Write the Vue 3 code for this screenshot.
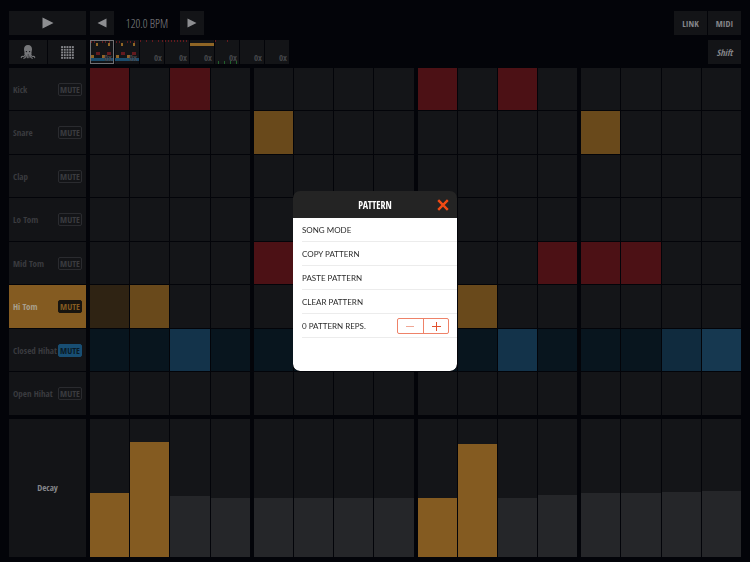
<template>
  <main class="app">
    <header class="toolbar">
      <button type="button" class="btn play" aria-label="Play">
        <svg viewBox="0 0 12 12" class="icon"><path d="M0.500 0.500 11.500 6 0.500 11.500z" /></svg>
      </button>
      <div class="tempo">
        <button type="button" class="btn step" aria-label="Slower" @click="bpm--">
          <svg viewBox="0 0 10 10" class="icon small"><path d="M9.500 0.500 0.500 5l9 4.500z" /></svg>
        </button>
        <output class="bpm">{{ bpm.toFixed(1) }} BPM</output>
        <button type="button" class="btn step" aria-label="Faster" @click="bpm++">
          <svg viewBox="0 0 10 10" class="icon small"><path d="M0.500 0.500 9.500 5l-9 4.500z" /></svg>
        </button>
      </div>
      <div class="sync">
        <button type="button" class="btn wide">LINK</button>
        <button type="button" class="btn wide">MIDI</button>
      </div>
    </header>

    <div class="toolbar second">
      <div class="modes">
        <button type="button" class="btn" aria-label="Kits">
          <svg viewBox="0 0 16 16" class="octopus">
            <path
              class="head"
              d="M8 1C5.300 1 4 2.900 4 5.200c0 1.500.7 2.800.6 4.800h6.800c-.1-2 .6-3.300.6-4.800C12 2.900 10.700 1 8 1z"
            />
            <path
              class="arms"
              d="M5.300 9c0 3-1.200 3.600-2.500 3.400-1-.2-1.500.3-1.500 1.200M6.300 9.500c.1 3-.6 4.600-2.600 4.700M7.300 9.500v4.300M8.900 9.500v4.300M9.900 9.500c0 3 .7 4.600 2.500 4.700M10.700 9c0 3 1.200 3.600 2.500 3.400 1-.2 1.500.3 1.500 1.200"
            />
            <circle class="eye" cx="6.400" cy="7.600" r=".7" />
            <circle class="eye" cx="9.600" cy="7.600" r=".7" />
          </svg>
        </button>
        <button type="button" class="btn" aria-label="Grid">
          <svg viewBox="0 0 13 13" class="dots">
            <template v-for="y in 5" :key="y">
              <rect v-for="x in 5" :key="x" :x="x * 2.7 - 2.6" :y="y * 2.7 - 2.6" width="1.9" height="1.9" />
            </template>
          </svg>
        </button>
      </div>
      <div class="patterns">
        <button
          v-for="(p, i) in patterns"
          :key="i"
          type="button"
          class="pattern"
          :class="{ selected: i === 0 }"
        >
          <svg viewBox="0 0 24 24" class="thumb">
            <rect
              v-for="(r, n) in p"
              :key="n"
              :class="r[0]"
              :x="r[1]"
              :y="r[2]"
              :width="r[3]"
              :height="r[4]"
            />
          </svg>
          <span class="reps">0x</span>
        </button>
      </div>
      <button type="button" class="btn wide shift">Shift</button>
    </div>

    <section class="tracks">
      <div v-for="t in tracks" :key="t.name" class="row">
        <div class="label" :class="{ active: t.active, muted: t.muted }">
          <span>{{ t.name }}</span>
          <button type="button" class="mute" @click="t.muted = !t.muted">MUTE</button>
        </div>
        <div class="beats">
          <div v-for="b in 4" :key="b" class="beat">
            <button
              v-for="s in 4"
              :key="s"
              type="button"
              class="cell"
              :class="stepClass(t, (b - 1) * 4 + s - 1)"
              :aria-label="`${t.name} step ${(b - 1) * 4 + s}`"
            ></button>
          </div>
        </div>
      </div>
    </section>

    <section class="row decay">
      <div class="label param">Decay</div>
      <div class="beats">
        <div v-for="b in 4" :key="b" class="beat">
          <div v-for="s in 4" :key="s" class="slot">
            <div
              class="bar"
              :class="{ on: lit.includes((b - 1) * 4 + s - 1) }"
              :style="{ height: decay[(b - 1) * 4 + s - 1] + '%' }"
            ></div>
          </div>
        </div>
      </div>
    </section>

    <div v-if="isOpen" class="overlay">
      <div class="dialog" role="dialog" aria-labelledby="dialog-title">
        <div class="dialog-head">
          <h1 id="dialog-title">PATTERN</h1>
          <button type="button" class="close" aria-label="Close" @click="isOpen = false">
            <svg viewBox="0 0 10 10"><path d="M1 1l8 8M9 1 1 9" /></svg>
          </button>
        </div>
        <ul class="menu">
          <li v-for="item in menuItems" :key="item">
            <button type="button" class="menu-item">{{ item }}</button>
          </li>
          <li class="reps-row">
            <span id="reps-label">{{ reps }} PATTERN REPS.</span>
            <div class="stepper" role="group" aria-labelledby="reps-label">
              <button type="button" class="minus" aria-label="Less" @click="reps = Math.max(0, reps - 1)">
                <svg viewBox="0 0 10 10"><path d="M1 5.500h8" /></svg>
              </button>
              <button type="button" aria-label="More" @click="reps++">
                <svg viewBox="0 0 10 10"><path d="M1 5.500h9M5.500 1v9" /></svg>
              </button>
            </div>
          </li>
        </ul>
      </div>
    </div>
  </main>
</template>

<script setup>
import { ref } from 'vue'

const bpm = ref(120)
const reps = ref(0)
const isOpen = ref(true)

const menuItems = ['SONG MODE', 'COPY PATTERN', 'PASTE PATTERN', 'CLEAR PATTERN']

const tracks = ref([
  { name: 'Kick', steps: { 0: 'red', 2: 'red', 8: 'red', 10: 'red' } },
  { name: 'Snare', steps: { 4: 'amber', 12: 'amber' } },
  { name: 'Clap', steps: {} },
  { name: 'Lo Tom', steps: {} },
  { name: 'Mid Tom', steps: { 4: 'red', 5: 'red', 11: 'red', 12: 'red', 13: 'red' } },
  {
    name: 'Hi Tom',
    active: true,
    steps: { 0: 'amber-low', 1: 'amber', 8: 'amber-low', 9: 'amber' },
  },
  {
    name: 'Closed Hihat',
    muted: true,
    base: 'blue-low',
    steps: { 2: 'blue', 6: 'blue', 10: 'blue', 14: 'blue-mid', 15: 'blue-high' },
  },
  { name: 'Open Hihat', steps: {} },
])

const decay = [46, 83, 44, 43, 43, 43, 43, 43, 43, 82, 43, 45, 46, 46, 47, 48]
const lit = [0, 1, 8, 9]

// thumbnail marks: colour, x, y, width, height
const groove = [
  ['r', 1, 1, 1, 2],
  ['r', 4, 1, 1, 2],
  ['r', 12, 1, 1, 2],
  ['r', 15, 1, 1, 2],
  ['r', 19, 1, 1, 2],
  ['a', 6, 3, 2, 3],
  ['a', 18, 3, 2, 3],
  ['r', 6, 12, 4, 3],
  ['r', 17, 12, 4, 3],
  ['a', 1, 15, 3, 3],
  ['a', 12, 15, 3, 3],
  ['b', 0, 18, 24, 3],
]

const ticks = (colour, y, h, xs) => xs.map((x) => [colour, x, y, 1, h])

const patterns = [
  groove,
  groove,
  ticks('r', 0, 2, [0, 6, 12, 18, 22]),
  ticks('r', 0, 2, [0, 3, 6, 9, 12, 15, 18, 21]),
  [['a', 0, 3, 24, 3]],
  [...ticks('r', 0, 2, [0, 12]), ...ticks('g', 21, 3, [3, 9, 15, 21])],
  [],
  [],
]

function stepClass(track, i) {
  return track.steps[i] || track.base || ''
}
</script>

<style>
body {
  margin: 0;
  background: #030409;
}
</style>

<style scoped>
.app {
  --cond: 'Open Sans Condensed', 'Noto Sans Condensed', 'Liberation Sans Narrow', 'Open Sans', sans-serif;
  min-height: 100vh;
  box-sizing: border-box;
  padding: 11px 9px 5px;
  display: flex;
  flex-direction: column;
  background: #030409;
  color: #85868a;
  font-family: var(--cond);
  font-size: 9px;
}

button {
  font: inherit;
  color: inherit;
  border: 0;
  padding: 0;
  margin: 0;
  background: none;
  cursor: pointer;
}

.btn {
  height: 24px;
  display: flex;
  align-items: center;
  justify-content: center;
  background: #131417;
  font-weight: 700;
}

.toolbar {
  display: flex;
  gap: 4px;
  margin-bottom: 5px;
}

.toolbar.second {
  margin-bottom: 4px;
}

.play,
.modes {
  width: 77px;
  flex: none;
}

.modes {
  display: grid;
  grid-template-columns: 1fr 1fr;
  gap: 1px;
}

.icon {
  width: 12px;
  height: 12px;
  fill: #8d8e91;
}

.icon.small {
  width: 10px;
  height: 10px;
}

.tempo {
  display: flex;
  align-items: center;
}

.step {
  width: 24px;
}

.bpm {
  width: 66px;
  text-align: center;
  font-family: 'Open Sans Condensed Light', 'Open Sans Condensed', 'Liberation Sans Narrow', sans-serif;
  font-size: 12px;
  font-weight: 300;
}

.sync {
  display: flex;
  gap: 1px;
  margin-left: auto;
}

.wide {
  width: 33px;
}

.shift {
  margin-left: auto;
  font-style: italic;
}

.octopus {
  width: 16px;
  height: 16px;
}

.head {
  fill: #76777a;
}

.arms {
  fill: none;
  stroke: #76777a;
  stroke-width: 1.1;
  stroke-linecap: round;
}

.eye {
  fill: #131417;
}

.dots {
  width: 13px;
  height: 13px;
  fill: #85868a;
}

.patterns {
  display: flex;
  gap: 1px;
}

.pattern {
  position: relative;
  width: 24px;
  height: 24px;
  background: #131417;
}

.pattern.selected {
  outline: 1px solid #707174;
  outline-offset: -1px;
}

.thumb {
  display: block;
  width: 24px;
  height: 24px;
}

.reps {
  position: absolute;
  right: 2px;
  bottom: 0;
  font-size: 9px;
  line-height: 12px;
  color: #45464a;
}

.r {
  fill: #641a1e;
}

.a {
  fill: #8f6525;
}

.b {
  fill: #1b4c6c;
}

.g {
  fill: #20602b;
}

.tracks {
  flex: 346 1 0px;
  display: flex;
  flex-direction: column;
  gap: 1px;
}

.row {
  display: flex;
  gap: 4px;
}

.tracks .row {
  flex: 1 1 0px;
  min-height: 28px;
}

.label {
  width: 77px;
  box-sizing: border-box;
  flex: none;
  padding: 0 4px;
  display: flex;
  align-items: center;
  justify-content: space-between;
  background: #131417;
  color: #3a3b3f;
  font-weight: 700;
  white-space: nowrap;
}

.label.active {
  background: #845b21;
  color: #a9a08e;
}

.mute {
  width: 24px;
  height: 13px;
  box-sizing: border-box;
  border: 1px solid #2a2b2f;
  border-radius: 2px;
  line-height: 11px;
}

.active .mute {
  background: #17140f;
  border-color: #17140f;
  color: #845b21;
}

.muted .mute {
  background: #184e73;
  border-color: #184e73;
  color: #091a26;
}

.beats {
  flex: 1;
  display: grid;
  grid-template-columns: repeat(4, 1fr);
  gap: 4px;
}

.beat {
  display: grid;
  grid-template-columns: repeat(4, 1fr);
  gap: 1px;
}

.cell {
  background: #141518;
}

.red {
  background: #4c1115;
}

.amber {
  background: #69491b;
}

.amber-low {
  background: #2f2313;
}

.blue {
  background: #13334a;
}

.blue-low {
  background: #08151e;
}

.blue-mid {
  background: #102b3e;
}

.blue-high {
  background: #163850;
}

.decay {
  flex: 138 1 0px;
  margin-top: 4px;
  min-height: 90px;
}

.label.param {
  justify-content: center;
  color: #85868a;
}

.slot {
  display: flex;
  align-items: flex-end;
  background: #141518;
}

.bar {
  width: 100%;
  background: #252629;
}

.bar.on {
  background: #845b21;
}

.overlay {
  position: fixed;
  inset: 0;
  display: flex;
  align-items: center;
  justify-content: center;
}

.dialog {
  width: 164px;
  border-radius: 7px;
  overflow: hidden;
  background: #242424;
  color: #2b2b2b;
  font-family: Lato, sans-serif;
  font-size: 8px;
}

.dialog-head {
  display: grid;
  grid-template-columns: 28px 1fr 28px;
  align-items: center;
  height: 27px;
}

.dialog-head h1 {
  grid-column: 2;
  margin: 0;
  text-align: center;
  color: #fff;
  font-family: var(--cond);
  font-size: 10px;
  line-height: 24px;
}

.close {
  height: 27px;
  display: flex;
  align-items: center;
  justify-content: center;
}

.close svg {
  width: 12px;
  height: 12px;
  fill: none;
  stroke: #f04a14;
  stroke-width: 2;
}

.menu {
  list-style: none;
  margin: 0;
  padding: 0 0 33px 9px;
  border-radius: 0 0 7px 7px;
  background: #fff;
}

.menu li {
  height: 24px;
  box-sizing: border-box;
  border-bottom: 1px solid #ececec;
}

.menu-item {
  width: 100%;
  height: 23px;
  text-align: left;
}

.reps-row {
  display: flex;
  align-items: center;
  justify-content: space-between;
  padding-right: 8px;
}

.stepper {
  display: flex;
  width: 52px;
  height: 16px;
  box-sizing: border-box;
  border: 1px solid #ee8268;
  border-radius: 2px;
}

.stepper button {
  flex: 1;
  display: flex;
  align-items: center;
  justify-content: center;
}

.stepper button + button {
  border-left: 1px solid #ee8268;
}

.stepper svg {
  width: 10px;
  height: 10px;
  fill: none;
  stroke: #e2502d;
  stroke-width: 1;
}

.stepper .minus svg {
  stroke: #f0a795;
}
</style>
